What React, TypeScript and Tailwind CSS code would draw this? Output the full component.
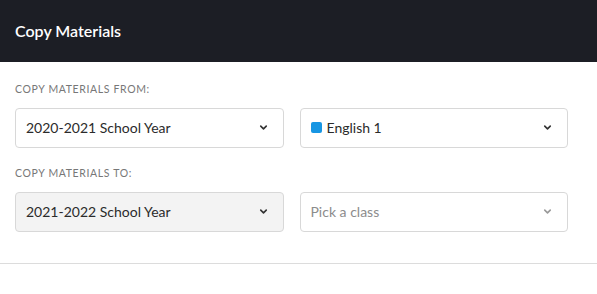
import { ChevronDown } from 'lucide-react'

function Select({ children, disabled, muted }: { children: React.ReactNode; disabled?: boolean; muted?: boolean }) {
  return (
    <div className={`flex h-[40px] items-center justify-between rounded-[4px] border border-[#d8d8d8] pl-[10px] pr-[14px] ${disabled ? 'bg-[#f3f3f3]' : 'bg-white'}`}>
      <div className={`flex items-center text-[14px] ${muted ? 'text-[#8c8c8c]' : 'text-[#2b2b2b]'}`}>{children}</div>
      <ChevronDown className={`h-[11px] w-[11px] ${muted ? 'text-[#9a9a9a]' : 'text-[#333]'}`} strokeWidth={3.5} />
    </div>
  )
}

export default function App() {
  return (
    <div className="min-h-[294px] bg-white font-['Lato','Open_Sans',sans-serif]">
      <header className="flex h-[62px] items-center bg-[#1c1e25] px-[15px]">
        <h1 className="text-[16px] font-semibold text-white">Copy Materials</h1>
      </header>
      <div className="border-b border-[#dcdcdc] px-[15px] pb-[31px] pt-[20px]">
        <p className="mb-[10px] text-[10.5px] uppercase tracking-[0.06em] text-[#777]">Copy Materials From:</p>
        <div className="grid w-[553px] grid-cols-2 gap-[16px]">
          <Select>2020-2021 School Year</Select>
          <Select>
            <span className="mr-[5px] h-[11px] w-[11px] rounded-[2px] bg-[#1796e3]" />
            English 1
          </Select>
        </div>
        <p className="mb-[10px] mt-[18px] text-[10.5px] uppercase tracking-[0.06em] text-[#777]">Copy Materials To:</p>
        <div className="grid w-[553px] grid-cols-2 gap-[16px]">
          <Select disabled>2021-2022 School Year</Select>
          <Select muted>Pick a class</Select>
        </div>
      </div>
    </div>
  )
}
